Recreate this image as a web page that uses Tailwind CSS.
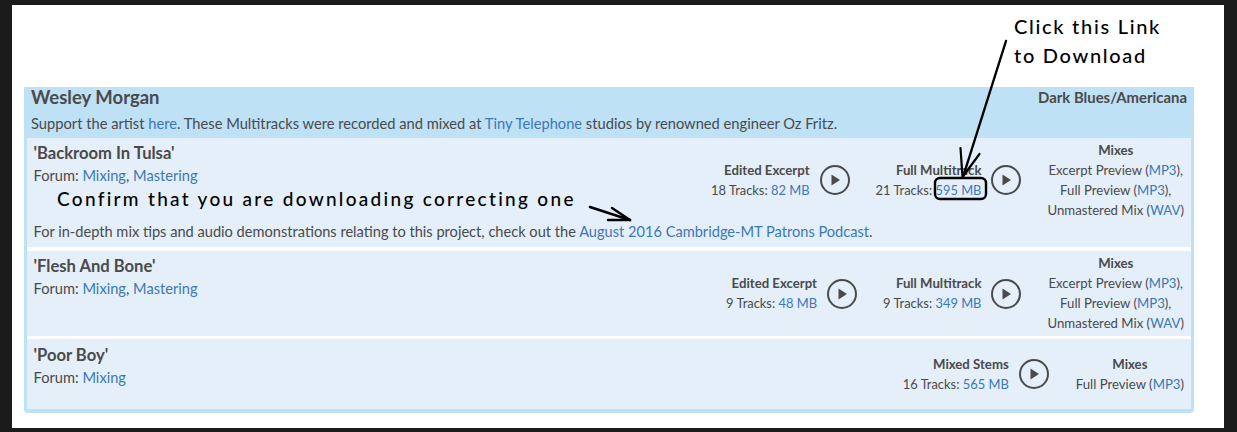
<!DOCTYPE html>
<html>
<head>
<meta charset="utf-8">
<script src="https://cdn.jsdelivr.net/npm/@tailwindcss/browser@4"></script>
</head>
<body class="m-0 bg-[#1b1b1b]">
<div class="w-[1237px] h-[432px] overflow-hidden pt-[5px] pl-[12px] font-['Lato',sans-serif] text-[14.65px] leading-[20px] text-[#4a4a4a]">
  <div class="relative w-[1212px] h-[423px] bg-white pt-[82px] pl-[12px]">
    <div class="w-[1170px] h-[326px] bg-[#bee1f6] rounded-b-[4px] px-[3px] pb-[4px] flex flex-col">
      <div class="h-[51px] px-[4px]">
        <div class="flex justify-between items-center h-[20px]">
          <span class="text-[18.5px] font-bold">Wesley Morgan</span>
          <span class="text-[14.9px] font-bold">Dark Blues/Americana</span>
        </div>
        <p class="mt-[7px] text-[14.69px]">Support the artist <a class="text-[#3b78b5]">here</a>. These Multitracks were recorded and mixed at <a class="text-[#3b78b5]">Tiny Telephone</a> studios by renowned engineer Oz Fritz.</p>
      </div>
      <div class="bg-white flex flex-col gap-[3.5px] flex-1">
        <div class="h-[109px] bg-[#e4effa] pl-[6.5px] pr-[7px] pt-[2px] flex flex-col">
          <div class="flex justify-between h-[80px]">
            <div class="pt-[3px]">
              <div class="text-[16.6px] font-bold">'Backroom In Tulsa'</div>
              <div class="mt-[3px]">Forum: <a class="text-[#3b78b5]">Mixing</a>, <a class="text-[#3b78b5]">Mastering</a></div>
            </div>
            <div class="flex items-center gap-[26px] text-[13.2px]">
              <div class="flex items-center gap-[10px]">
                <div class="text-right"><div class="font-bold">Edited Excerpt</div><div class="text-[12.9px]">18 Tracks: <a class="text-[#3b78b5]">82 MB</a></div></div>
                <svg width="30" height="30" viewBox="0 0 30 30"><circle cx="15" cy="15" r="14" fill="none" stroke="#4a4a4a" stroke-width="2"/><path d="M11.5 9.5v11l8.5-5.5z" fill="#4a4a4a"/></svg>
              </div>
              <div class="flex items-center gap-[10px]">
                <div class="text-right"><div class="font-bold">Full Multitrack</div><div class="text-[12.9px]">21 Tracks: <a class="text-[#3b78b5]">595 MB</a></div></div>
                <svg width="30" height="30" viewBox="0 0 30 30"><circle cx="15" cy="15" r="14" fill="none" stroke="#4a4a4a" stroke-width="2"/><path d="M11.5 9.5v11l8.5-5.5z" fill="#4a4a4a"/></svg>
              </div>
              <div class="text-center">
                <div class="font-bold">Mixes</div>
                <div>Excerpt Preview (<a class="text-[#3b78b5]">MP3</a>),</div>
                <div>Full Preview (<a class="text-[#3b78b5]">MP3</a>),</div>
                <div>Unmastered Mix (<a class="text-[#3b78b5]">WAV</a>)</div>
              </div>
            </div>
          </div>
          <p class="mt-[2px] text-[14.62px]">For in-depth mix tips and audio demonstrations relating to this project, check out the <a class="text-[#3b78b5]">August 2016 Cambridge-MT Patrons Podcast</a>.</p>
        </div>
        <div class="h-[85px] bg-[#e4effa] pl-[6.5px] pr-[7px] pt-[2px] flex justify-between">
          <div class="pt-[3px]">
            <div class="text-[16.6px] font-bold">'Flesh And Bone'</div>
            <div class="mt-[3px]">Forum: <a class="text-[#3b78b5]">Mixing</a>, <a class="text-[#3b78b5]">Mastering</a></div>
          </div>
          <div class="flex items-center h-[81px] gap-[26px] text-[13.2px]">
            <div class="flex items-center gap-[10px]">
              <div class="text-right"><div class="font-bold">Edited Excerpt</div><div class="text-[12.9px]">9 Tracks: <a class="text-[#3b78b5]">48 MB</a></div></div>
              <svg class="mt-[2px]" width="30" height="30" viewBox="0 0 30 30"><circle cx="15" cy="15" r="14" fill="none" stroke="#4a4a4a" stroke-width="2"/><path d="M11.5 9.5v11l8.5-5.5z" fill="#4a4a4a"/></svg>
            </div>
            <div class="flex items-center gap-[10px]">
              <div class="text-right"><div class="font-bold">Full Multitrack</div><div class="text-[12.9px]">9 Tracks: <a class="text-[#3b78b5]">349 MB</a></div></div>
              <svg class="mt-[2px]" width="30" height="30" viewBox="0 0 30 30"><circle cx="15" cy="15" r="14" fill="none" stroke="#4a4a4a" stroke-width="2"/><path d="M11.5 9.5v11l8.5-5.5z" fill="#4a4a4a"/></svg>
            </div>
            <div class="text-center">
              <div class="font-bold">Mixes</div>
              <div>Excerpt Preview (<a class="text-[#3b78b5]">MP3</a>),</div>
              <div>Full Preview (<a class="text-[#3b78b5]">MP3</a>),</div>
              <div>Unmastered Mix (<a class="text-[#3b78b5]">WAV</a>)</div>
            </div>
          </div>
        </div>
        <div class="flex-1 bg-[#e4effa] pl-[6.5px] pr-[7px] pt-[3px] flex justify-between">
          <div class="pt-[3px]">
            <div class="text-[16.6px] font-bold">'Poor Boy'</div>
            <div class="mt-[3px]">Forum: <a class="text-[#3b78b5]">Mixing</a></div>
          </div>
          <div class="flex items-center h-[64px] gap-[27px] text-[13.2px]">
            <div class="flex items-center gap-[10px]">
              <div class="text-right"><div class="font-bold">Mixed Stems</div><div class="text-[12.9px]">16 Tracks: <a class="text-[#3b78b5]">565 MB</a></div></div>
              <svg width="30" height="30" viewBox="0 0 30 30"><circle cx="15" cy="15" r="14" fill="none" stroke="#4a4a4a" stroke-width="2"/><path d="M11.5 9.5v11l8.5-5.5z" fill="#4a4a4a"/></svg>
            </div>
            <div class="text-center">
              <div class="font-bold">Mixes</div>
              <div>Full Preview (<a class="text-[#3b78b5]">MP3</a>)</div>
            </div>
          </div>
        </div>
      </div>
    </div>
    <div class="absolute left-[45px] top-[182px] text-[19px] leading-[24px] text-black font-medium tracking-[2.3px] whitespace-nowrap">Confirm that you are downloading correcting one</div>
    <div class="absolute left-[1002px] top-[7px] text-[20px] leading-[29px] text-black font-medium tracking-[1.7px] whitespace-nowrap">Click this Link<br>to Download</div>
    <svg class="absolute left-0 top-0 pointer-events-none" width="1212" height="423" viewBox="0 0 1212 423" fill="none" stroke="#000" stroke-linecap="round" stroke-linejoin="round">
      <rect x="923" y="173" width="51" height="21" rx="5" stroke-width="2.4"/>
      <path d="M994 36 L951 172" stroke-width="2.4"/>
      <path d="M948.5 143 L950.5 172 L967.5 149" stroke-width="2.2"/>
      <path d="M578 202 L618 215" stroke-width="2.6"/>
      <path d="M600 203 L618 215 L596 215" stroke-width="2.4"/>
    </svg>
  </div>
</div>
</body>
</html>
